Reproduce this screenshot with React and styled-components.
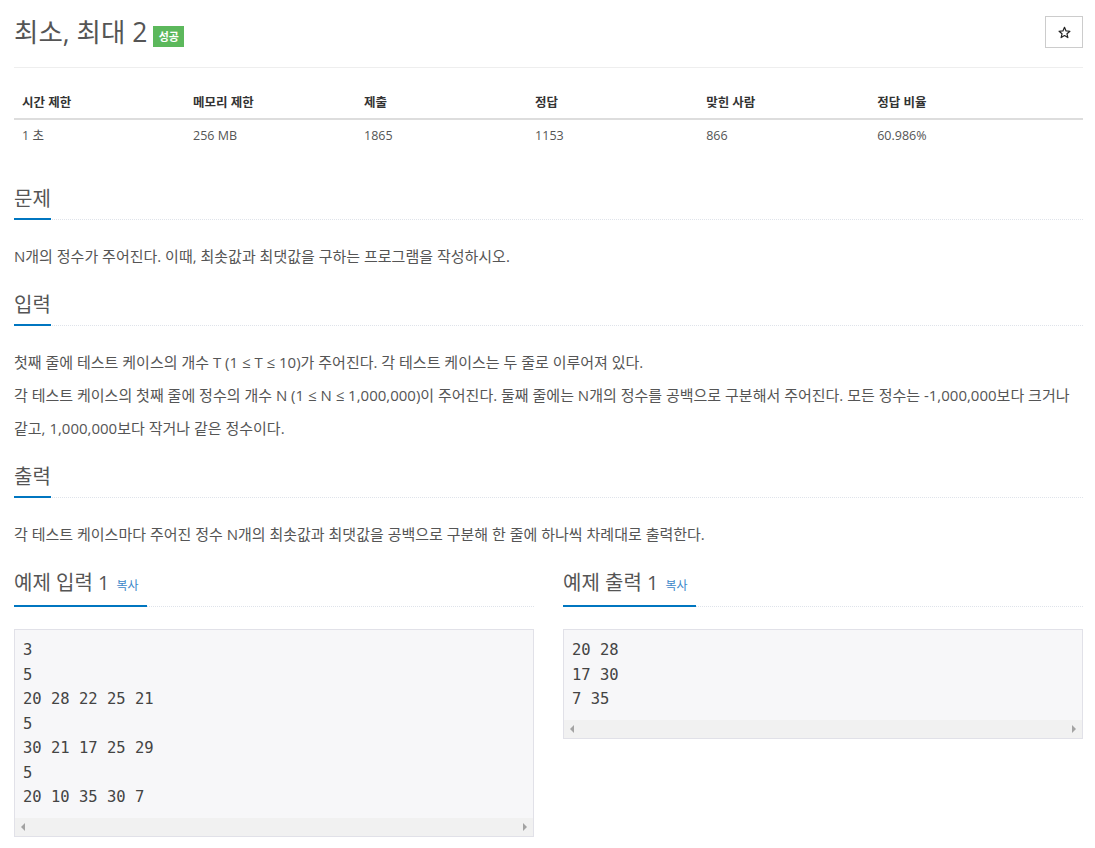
import React from "react";
import styled, { createGlobalStyle } from "styled-components";

const GlobalStyle = createGlobalStyle`
  body {
    margin: 0;
    background: #fff;
    font-family: "Open Sans", "Noto Sans CJK KR", sans-serif;
    color: #555;
  }
`;

const Page = styled.div`
  padding: 0 12px 20px 14px;
`;

const Header = styled.div`
  display: flex;
  align-items: center;
  justify-content: space-between;
  padding: 16px 0 19px;
  border-bottom: 1px solid #eee;
`;

const Title = styled.h1`
  display: flex;
  align-items: center;
  margin: 0;
  font-size: 26.5px;
  font-weight: 400;
  line-height: 32px;
  color: #555;
`;

const Badge = styled.span`
  display: inline-flex;
  align-items: center;
  justify-content: center;
  width: 31px;
  height: 21px;
  margin: 9px 0 0 6px;
  background: #5cb85c;
  color: #fff;
  font-size: 11px;
  font-weight: 700;
`;

const StarButton = styled.button`
  width: 38px;
  height: 32px;
  border: 1px solid #ccc;
  background: #fff;
  padding: 0;
  display: flex;
  align-items: center;
  justify-content: center;
  color: #333;
`;

const InfoTable = styled.table`
  width: 100%;
  border-collapse: collapse;
  margin: 18px 0 37px;
  font-size: 12.5px;
  th {
    text-align: left;
    width: 16%;
    padding: 7px 8px 5px;
    line-height: 20px;
    font-weight: 700;
    color: #333;
    border-bottom: 2px solid #ddd;
  }
  th:last-child {
    width: auto;
  }
  td {
    padding: 6px 8px 5px;
    line-height: 20px;
    color: #555;
  }
`;

const Section = styled.section`
  margin-bottom: 21px;
`;

const Headline = styled.div`
  display: flex;
  align-items: flex-end;
  border-bottom: 1px dotted #dfe3ea;
  margin-bottom: ${({ $gap }) => $gap || 20}px;
`;

const HeadTitle = styled.h2`
  margin: 0 0 -1px;
  padding: 0 ${({ $pad }) => $pad || 0}px 8px 0;
  font-size: 20px;
  font-weight: 400;
  line-height: 22px;
  color: #555;
  border-bottom: 2px solid #0076c0;
`;

const CopyLink = styled.span`
  margin-left: 7px;
  font-size: 12px;
  color: #3d87c9;
`;

const Text = styled.p`
  margin: 0;
  font-size: 15px;
  line-height: 33px;
  color: #555;
`;

const SampleGrid = styled.div`
  display: grid;
  grid-template-columns: 1fr 1fr;
  gap: 29px;
  align-items: start;
`;

const SampleBox = styled.div`
  border: 1px solid #e1e1e8;
  background: #f7f7f9;
`;

const Pre = styled.pre`
  margin: 0;
  padding: 8px 8px 8px;
  font-family: "DejaVu Sans Mono", "Liberation Mono", monospace;
  font-size: 15.5px;
  line-height: 24.5px;
  color: #444;
`;

const ScrollBar = styled.div`
  height: 18px;
  background: #f1f1f1;
  display: flex;
  align-items: center;
  justify-content: space-between;
  padding: 0 6px;
`;

const Arrow = styled.span`
  width: 0;
  height: 0;
  border-top: 4px solid transparent;
  border-bottom: 4px solid transparent;
  ${({ $dir }) =>
    $dir === "left"
      ? "border-right: 4px solid #a3a3a3;"
      : "border-left: 4px solid #a3a3a3;"}
`;

const StarIcon = () => (
  <svg width="13" height="13" viewBox="0 0 24 24" fill="none" stroke="#222" strokeWidth="2.2" strokeLinejoin="round">
    <path d="M12 2.5l2.9 6.6 7.1.6-5.4 4.7 1.6 7-6.2-3.7-6.2 3.7 1.6-7L2 9.7l7.1-.6z" />
  </svg>
);

const Sample = ({ title, data }) => (
  <div>
    <Headline $gap={22}>
      <HeadTitle $pad={8}>
        {title}
        <CopyLink>복사</CopyLink>
      </HeadTitle>
    </Headline>
    <SampleBox>
      <Pre>{data}</Pre>
      <ScrollBar>
        <Arrow $dir="left" />
        <Arrow $dir="right" />
      </ScrollBar>
    </SampleBox>
  </div>
);

const info = [
  ["시간 제한", "1 초"],
  ["메모리 제한", "256 MB"],
  ["제출", "1865"],
  ["정답", "1153"],
  ["맞힌 사람", "866"],
  ["정답 비율", "60.986%"],
];

export default function App() {
  return (
    <Page>
      <GlobalStyle />
      <Header>
        <Title>
          최소, 최대 2<Badge>성공</Badge>
        </Title>
        <StarButton>
          <StarIcon />
        </StarButton>
      </Header>

      <InfoTable>
        <thead>
          <tr>
            {info.map(([h]) => (
              <th key={h}>{h}</th>
            ))}
          </tr>
        </thead>
        <tbody>
          <tr>
            {info.map(([h, v]) => (
              <td key={h}>{v}</td>
            ))}
          </tr>
        </tbody>
      </InfoTable>

      <Section>
        <Headline>
          <HeadTitle>문제</HeadTitle>
        </Headline>
        <Text>N개의 정수가 주어진다. 이때, 최솟값과 최댓값을 구하는 프로그램을 작성하시오.</Text>
      </Section>

      <Section>
        <Headline>
          <HeadTitle>입력</HeadTitle>
        </Headline>
        <Text>첫째 줄에 테스트 케이스의 개수 T (1 ≤ T ≤ 10)가 주어진다. 각 테스트 케이스는 두 줄로 이루어져 있다.</Text>
        <Text>
          각 테스트 케이스의 첫째 줄에 정수의 개수 N (1 ≤ N ≤ 1,000,000)이 주어진다. 둘째 줄에는 N개의 정수를
          공백으로 구분해서 주어진다. 모든 정수는 -1,000,000보다 크거나 같고, 1,000,000보다 작거나 같은 정수이다.
        </Text>
      </Section>

      <Section>
        <Headline>
          <HeadTitle>출력</HeadTitle>
        </Headline>
        <Text>각 테스트 케이스마다 주어진 정수 N개의 최솟값과 최댓값을 공백으로 구분해 한 줄에 하나씩 차례대로 출력한다.</Text>
      </Section>

      <SampleGrid>
        <Sample title="예제 입력 1" data={"3\n5\n20 28 22 25 21\n5\n30 21 17 25 29\n5\n20 10 35 30 7"} />
        <Sample title="예제 출력 1" data={"20 28\n17 30\n7 35"} />
      </SampleGrid>
    </Page>
  );
}
